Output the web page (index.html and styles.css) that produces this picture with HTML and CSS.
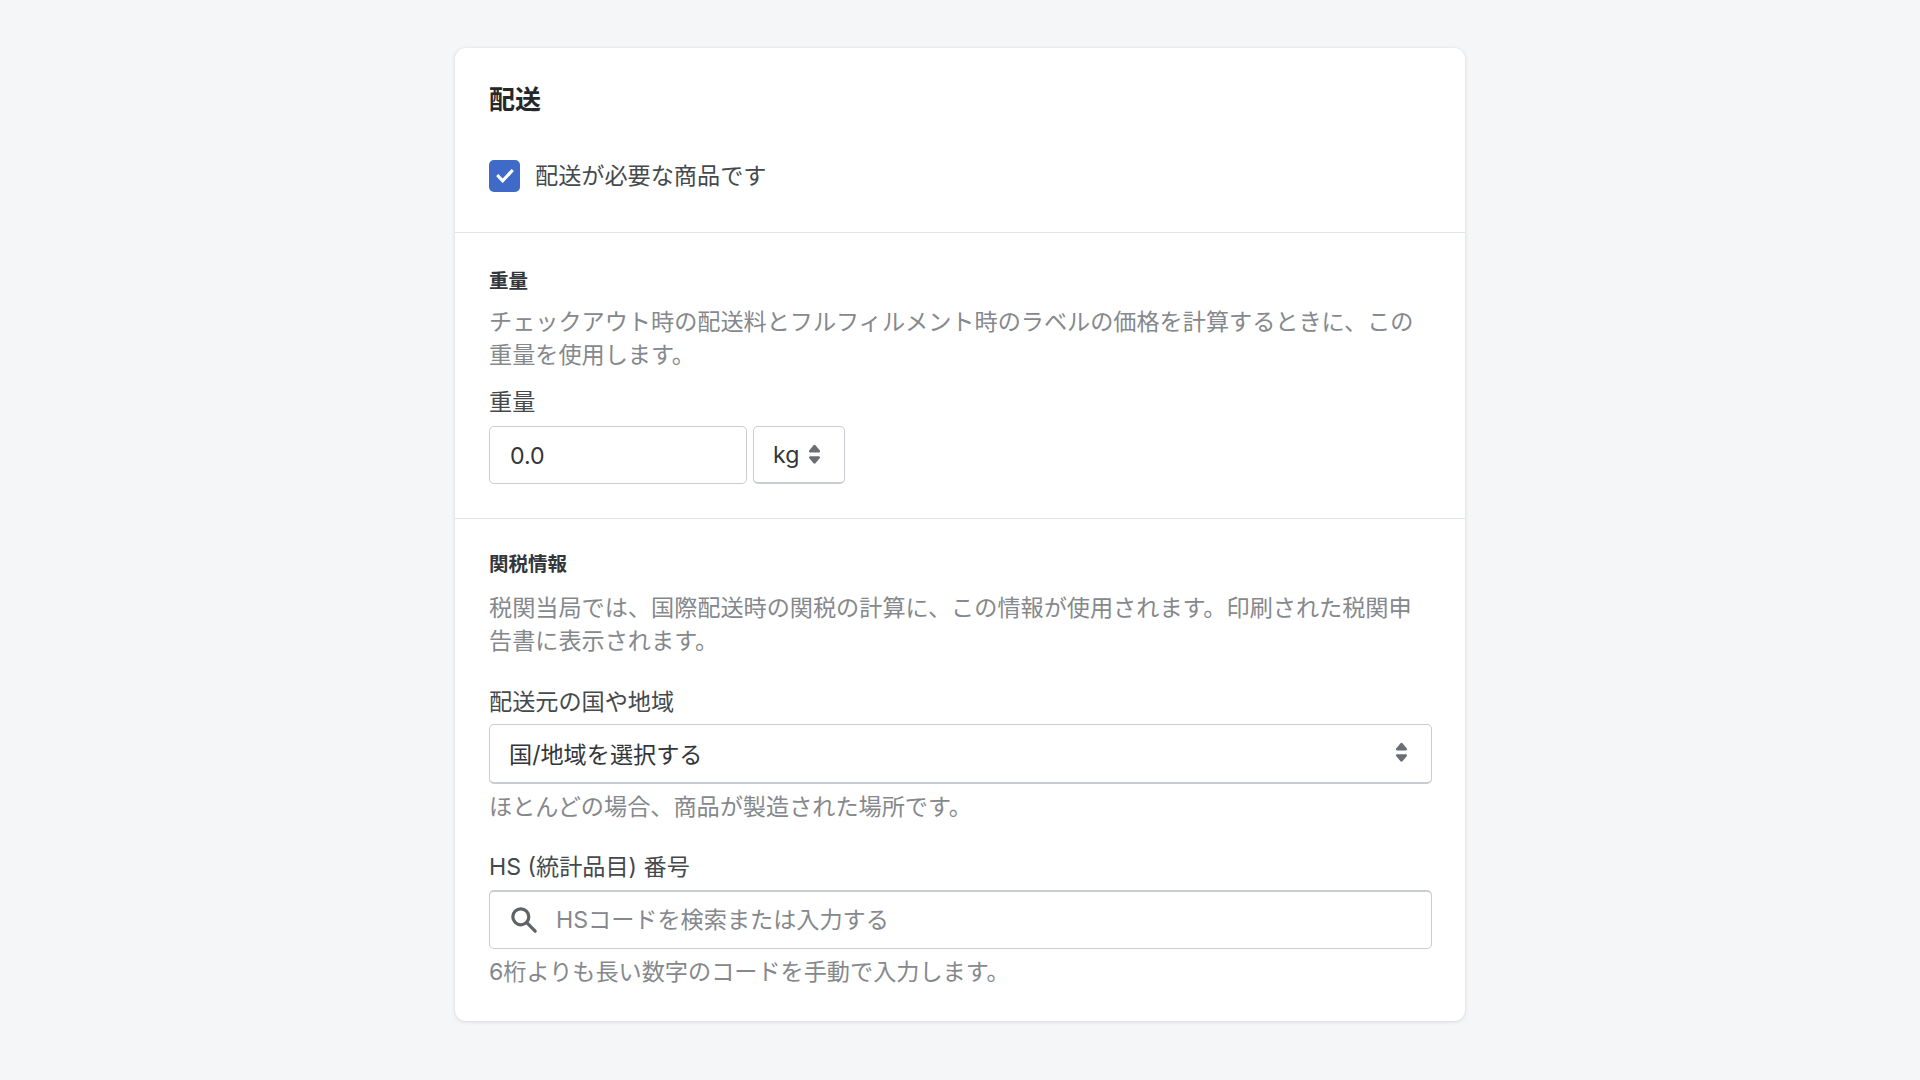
FILE: index.html
```html
<!DOCTYPE html>
<html lang="ja">
<head>
  <meta charset="UTF-8" />
  <meta name="viewport" content="width=device-width, initial-scale=1.0"/>
  <title>配送</title>
  <link rel="stylesheet" href="styles.css">
</head>
<body>
  <div class="card">
    <section class="section section-shipping">
      <h2 class="card-title">配送</h2>
      <label class="check-row">
        <span class="checkbox">
          <svg viewBox="3 3 14 14"><path d="m8.315 13.859-3.182-3.417a.506.506 0 0 1 0-.684l.643-.683a.437.437 0 0 1 .642 0l2.22 2.393 4.942-5.327a.436.436 0 0 1 .643 0l.643.684a.504.504 0 0 1 0 .683l-5.91 6.35a.437.437 0 0 1-.642 0"/></svg>
        </span>
        <span>配送が必要な商品です</span>
      </label>
    </section>

    <section class="section section-weight">
      <h3 class="sub-title">重量</h3>
      <p class="desc">チェックアウト時の配送料とフルフィルメント時のラベルの価格を計算するときに、この重量を使用します。</p>
      <div class="field-label">重量</div>
      <div class="weight-row">
        <input class="text-input weight-input" type="text" value="0.0" />
        <div class="unit-select">
          <span>kg</span>
          <svg class="caret" viewBox="6 4 8 12"><path d="M7.676 9h4.648c.563 0 .879-.603.53-1.014l-2.323-2.746a.708.708 0 0 0-1.062 0l-2.324 2.746c-.347.411-.032 1.014.531 1.014Zm4.648 2h-4.648c-.563 0-.878.603-.53 1.014l2.323 2.746c.281.333.78.333 1.062 0l2.323-2.746c.349-.411.033-1.014-.53-1.014Z"/></svg>
        </div>
      </div>
    </section>

    <section class="section section-customs">
      <h3 class="sub-title">関税情報</h3>
      <p class="desc">税関当局では、国際配送時の関税の計算に、この情報が使用されます。印刷された税関申告書に表示されます。</p>

      <div class="field-label origin-label">配送元の国や地域</div>
      <div class="country-select">
        <span>国/地域を選択する</span>
        <svg class="caret" viewBox="6 4 8 12"><path d="M7.676 9h4.648c.563 0 .879-.603.53-1.014l-2.323-2.746a.708.708 0 0 0-1.062 0l-2.324 2.746c-.347.411-.032 1.014.531 1.014Zm4.648 2h-4.648c-.563 0-.878.603-.53 1.014l2.323 2.746c.281.333.78.333 1.062 0l2.323-2.746c.349-.411.033-1.014-.53-1.014Z"/></svg>
      </div>
      <p class="help">ほとんどの場合、商品が製造された場所です。</p>

      <div class="field-label hs-label">HS (統計品目) 番号</div>
      <div class="search-box">
        <svg class="search-icon" viewBox="0 0 20 20"><path d="M8 12a4 4 0 1 1 0-8 4 4 0 0 1 0 8zm9.707 4.293-4.82-4.82A5.968 5.968 0 0 0 14 8 6 6 0 0 0 2 8a6 6 0 0 0 6 6 5.968 5.968 0 0 0 3.473-1.113l4.82 4.82a.997.997 0 0 0 1.414 0 .999.999 0 0 0 0-1.414z"/></svg>
        <input class="search-input" type="text" placeholder="HSコードを検索または入力する" />
      </div>
      <p class="help">6桁よりも長い数字のコードを手動で入力します。</p>
    </section>
  </div>
</body>
</html>
```

FILE: styles.css
```css
* {
  box-sizing: border-box;
}

body {
  margin: 0;
  height: 1080px;
  overflow: hidden;
  background: #f5f6f8;
  color: #25282b;
  font-family: Inter, "Noto Sans CJK JP", sans-serif;
  font-size: 23.15px;
}

h2, h3, p {
  margin: 0;
}

.card {
  width: 1010px;
  margin: 48px 0 0 455px;
  background: #fff;
  border-radius: 11px;
  box-shadow: 0 0 0 1px rgba(63, 63, 68, 0.02), 0 1px 4px rgba(63, 63, 68, 0.14);
}

.section {
  padding: 0 34px;
}

.section + .section {
  border-top: 1px solid #e3e4e7;
}

.section-shipping {
  padding-top: 35px;
  padding-bottom: 40px;
}

.section-weight {
  padding-top: 34px;
  padding-bottom: 34px;
}

.section-customs {
  padding-top: 31px;
  padding-bottom: 32px;
}

.card-title {
  font-size: 26px;
  font-weight: 600;
  line-height: 34px;
}

.check-row {
  display: flex;
  align-items: center;
  gap: 15px;
  margin-top: 43px;
  line-height: 32px;
  color: #45494d;
}

.checkbox {
  display: flex;
  align-items: center;
  justify-content: center;
  width: 31px;
  height: 32px;
  background: #3f6ac8;
  border-radius: 5px;
}

.checkbox svg {
  width: 24px;
  height: 24px;
  fill: #fff;
}

.sub-title {
  font-size: 19.5px;
  font-weight: 700;
  line-height: 28px;
  color: #33363a;
}

.desc, .help {
  color: #85888c;
  line-height: 33px;
}

.desc {
  margin-top: 11px;
}

.section-customs .desc {
  margin-top: 14px;
}

.help {
  margin-top: 7px;
}

.field-label {
  margin-top: 15px;
  line-height: 30px;
  color: #45494d;
}

.origin-label {
  margin-top: 29px;
}

.hs-label {
  margin-top: 28px;
}

.weight-row {
  display: flex;
  gap: 6px;
  margin-top: 9px;
}

.text-input, .unit-select, .country-select, .search-box {
  background: #fff;
  border: 1.5px solid #c9ccd1;
  border-radius: 5px;
  color: #33363a;
  font: inherit;
}

.weight-input {
  width: 258px;
  height: 58px;
  padding: 1px 20px 0;
  outline: none;
}

.unit-select {
  display: flex;
  align-items: center;
  gap: 8px;
  width: 92px;
  height: 58px;
  padding-left: 19px;
  border-bottom-width: 2px;
}

.caret {
  width: 15px;
  height: 22.5px;
  fill: #6b6f74;
}

.country-select {
  display: flex;
  align-items: center;
  justify-content: space-between;
  width: 943px;
  height: 60px;
  margin-top: 7px;
  padding: 0 22px 2px 19px;
  border-bottom-width: 2px;
}

.search-box {
  display: flex;
  align-items: center;
  gap: 16px;
  width: 943px;
  height: 59px;
  margin-top: 8px;
  padding: 0 20px 0 18px;
  border-top-width: 2px;
}

.search-icon {
  width: 32px;
  height: 32px;
  fill: #5f6368;
  flex: none;
}

.search-input {
  flex: 1;
  border: none;
  outline: none;
  padding: 0;
  font: inherit;
  color: #33363a;
  background: transparent;
}

.search-input::placeholder {
  color: #85888c;
  opacity: 1;
}
```
